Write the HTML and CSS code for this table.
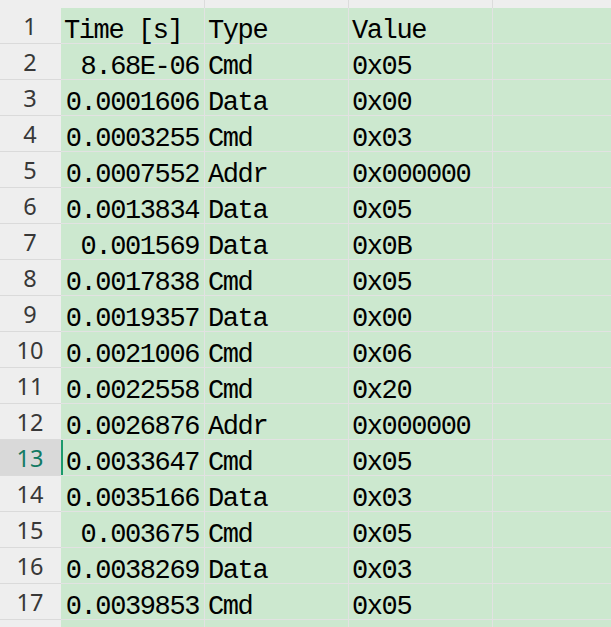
FILE: index.html
```html
<!DOCTYPE html>
<html>
<head>
<meta charset="utf-8">
<link rel="stylesheet" href="styles.css">
</head>
<body>
<div class="sheet">
  <div class="ch corner"></div><div class="ch"></div><div class="ch"></div><div class="ch"></div><div class="ch"></div>

  <div class="rh">1</div><div class="c">Time [s]</div><div class="c">Type</div><div class="c">Value</div><div class="c"></div>
  <div class="rh">2</div><div class="c num">8.68E-06</div><div class="c">Cmd</div><div class="c">0x05</div><div class="c"></div>
  <div class="rh">3</div><div class="c num">0.0001606</div><div class="c">Data</div><div class="c">0x00</div><div class="c"></div>
  <div class="rh">4</div><div class="c num">0.0003255</div><div class="c">Cmd</div><div class="c">0x03</div><div class="c"></div>
  <div class="rh">5</div><div class="c num">0.0007552</div><div class="c">Addr</div><div class="c">0x000000</div><div class="c"></div>
  <div class="rh">6</div><div class="c num">0.0013834</div><div class="c">Data</div><div class="c">0x05</div><div class="c"></div>
  <div class="rh">7</div><div class="c num">0.001569</div><div class="c">Data</div><div class="c">0x0B</div><div class="c"></div>
  <div class="rh">8</div><div class="c num">0.0017838</div><div class="c">Cmd</div><div class="c">0x05</div><div class="c"></div>
  <div class="rh">9</div><div class="c num">0.0019357</div><div class="c">Data</div><div class="c">0x00</div><div class="c"></div>
  <div class="rh">10</div><div class="c num">0.0021006</div><div class="c">Cmd</div><div class="c">0x06</div><div class="c"></div>
  <div class="rh">11</div><div class="c num">0.0022558</div><div class="c">Cmd</div><div class="c">0x20</div><div class="c"></div>
  <div class="rh">12</div><div class="c num">0.0026876</div><div class="c">Addr</div><div class="c">0x000000</div><div class="c"></div>
  <div class="rh active">13</div><div class="c num sel">0.0033647</div><div class="c">Cmd</div><div class="c">0x05</div><div class="c"></div>
  <div class="rh">14</div><div class="c num">0.0035166</div><div class="c">Data</div><div class="c">0x03</div><div class="c"></div>
  <div class="rh">15</div><div class="c num">0.003675</div><div class="c">Cmd</div><div class="c">0x05</div><div class="c"></div>
  <div class="rh">16</div><div class="c num">0.0038269</div><div class="c">Data</div><div class="c">0x03</div><div class="c"></div>
  <div class="rh">17</div><div class="c num">0.0039853</div><div class="c">Cmd</div><div class="c">0x05</div><div class="c"></div>
  <div class="rh"></div><div class="c"></div><div class="c"></div><div class="c"></div><div class="c"></div>
</div>
</body>
</html>
```
FILE: styles.css
```css
html, body {
  margin: 0;
  padding: 0;
  background: #ffffff;
  overflow: hidden;
}

.sheet {
  display: grid;
  grid-template-columns: 61px 144px 144px 144px 144px;
  grid-template-rows: 8px repeat(18, 36px);
  width: 637px;
}

.ch {
  background: #eeeeee;
  border-right: 1px solid #dcdcdc;
  box-sizing: border-box;
}

.ch.corner {
  border-right: none;
}

.rh {
  background: #eeeeee;
  border-bottom: 1px solid #dadada;
  box-sizing: border-box;
  font-family: "Noto Sans", "Open Sans", sans-serif;
  font-size: 23.5px;
  line-height: 24px;
  padding-top: 6px;
  color: #383838;
  text-align: center;
  padding-right: 1px;
}

.rh.active {
  background: #d9d9d9;
  color: #127a63;
}

.c {
  background: #cce8cf;
  border-right: 1px solid #e2e2e2;
  border-bottom: 1px solid #e2e2e2;
  box-sizing: border-box;
  font-family: "Liberation Mono", monospace;
  font-size: 27px;
  letter-spacing: -1.4px;
  line-height: 30px;
  padding-top: 8px;
  padding-left: 3px;
  padding-right: 3px;
  color: #000000;
  white-space: nowrap;
}

.c.num {
  text-align: right;
  padding-right: 5px;
}

.c.sel {
  box-shadow: inset 2px 0 0 #1b9a6b;
}
```
